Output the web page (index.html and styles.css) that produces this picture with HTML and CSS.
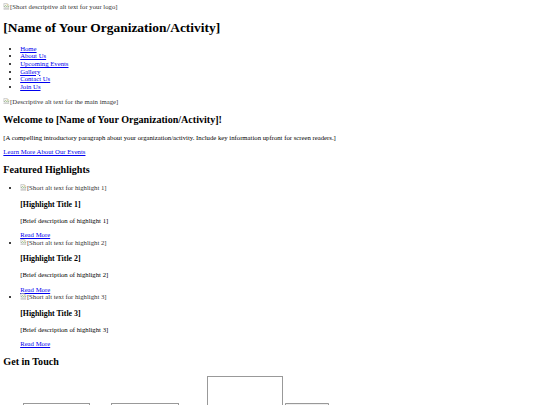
FILE: index.html
```html
<!DOCTYPE html>
<html lang="en">
<head>
<meta charset="utf-8">
<title>[Name of Your Organization/Activity]</title>
<link rel="stylesheet" href="styles.css">
</head>
<body>
<header>
  <span class="alt-img"><svg class="broken" viewBox="0 0 16 16" width="16" height="16"><path d="M2 1h8l4 4v5l-2-1-2 2-2-2-2 2-2-2-2 1z" fill="#f4f4f4" stroke="#999" stroke-width="1"/><path d="M3 9l3-3 3 3 2-2 3 3" fill="none" stroke="#5a9d3a" stroke-width="1.2"/><circle cx="10" cy="4" r="1.2" fill="#e8b84a"/><path d="M2 13l2-1 2 2 2-2 2 2 2-2 2 1v2H2z" fill="#f4f4f4" stroke="#999" stroke-width="1"/></svg>[Short descriptive alt text for your logo]</span>
  <h1>[Name of Your Organization/Activity]</h1>
  <nav>
    <ul>
      <li><a href="#">Home</a></li>
      <li><a href="#">About Us</a></li>
      <li><a href="#">Upcoming Events</a></li>
      <li><a href="#">Gallery</a></li>
      <li><a href="#">Contact Us</a></li>
      <li><a href="#">Join Us</a></li>
    </ul>
  </nav>
</header>
<main>
  <section class="hero">
    <span class="alt-img"><svg class="broken" viewBox="0 0 16 16" width="16" height="16"><path d="M2 1h8l4 4v5l-2-1-2 2-2-2-2 2-2-2-2 1z" fill="#f4f4f4" stroke="#999" stroke-width="1"/><path d="M3 9l3-3 3 3 2-2 3 3" fill="none" stroke="#5a9d3a" stroke-width="1.2"/><circle cx="10" cy="4" r="1.2" fill="#e8b84a"/><path d="M2 13l2-1 2 2 2-2 2 2 2-2 2 1v2H2z" fill="#f4f4f4" stroke="#999" stroke-width="1"/></svg>[Descriptive alt text for the main image]</span>
    <h2>Welcome to [Name of Your Organization/Activity]!</h2>
    <p>[A compelling introductory paragraph about your organization/activity. Include key information upfront for screen readers.]</p>
    <p><a href="#">Learn More About Our Events</a></p>
  </section>
  <section class="highlights">
    <h2>Featured Highlights</h2>
    <ul>
      <li>
        <span class="alt-img"><svg class="broken" viewBox="0 0 16 16" width="16" height="16"><path d="M2 1h8l4 4v5l-2-1-2 2-2-2-2 2-2-2-2 1z" fill="#f4f4f4" stroke="#999" stroke-width="1"/><path d="M3 9l3-3 3 3 2-2 3 3" fill="none" stroke="#5a9d3a" stroke-width="1.2"/><circle cx="10" cy="4" r="1.2" fill="#e8b84a"/><path d="M2 13l2-1 2 2 2-2 2 2 2-2 2 1v2H2z" fill="#f4f4f4" stroke="#999" stroke-width="1"/></svg>[Short alt text for highlight 1]</span>
        <h3>[Highlight Title 1]</h3>
        <p>[Brief description of highlight 1]</p>
        <a href="#">Read More</a>
      </li>
      <li>
        <span class="alt-img"><svg class="broken" viewBox="0 0 16 16" width="16" height="16"><path d="M2 1h8l4 4v5l-2-1-2 2-2-2-2 2-2-2-2 1z" fill="#f4f4f4" stroke="#999" stroke-width="1"/><path d="M3 9l3-3 3 3 2-2 3 3" fill="none" stroke="#5a9d3a" stroke-width="1.2"/><circle cx="10" cy="4" r="1.2" fill="#e8b84a"/><path d="M2 13l2-1 2 2 2-2 2 2 2-2 2 1v2H2z" fill="#f4f4f4" stroke="#999" stroke-width="1"/></svg>[Short alt text for highlight 2]</span>
        <h3>[Highlight Title 2]</h3>
        <p>[Brief description of highlight 2]</p>
        <a href="#">Read More</a>
      </li>
      <li>
        <span class="alt-img"><svg class="broken" viewBox="0 0 16 16" width="16" height="16"><path d="M2 1h8l4 4v5l-2-1-2 2-2-2-2 2-2-2-2 1z" fill="#f4f4f4" stroke="#999" stroke-width="1"/><path d="M3 9l3-3 3 3 2-2 3 3" fill="none" stroke="#5a9d3a" stroke-width="1.2"/><circle cx="10" cy="4" r="1.2" fill="#e8b84a"/><path d="M2 13l2-1 2 2 2-2 2 2 2-2 2 1v2H2z" fill="#f4f4f4" stroke="#999" stroke-width="1"/></svg>[Short alt text for highlight 3]</span>
        <h3>[Highlight Title 3]</h3>
        <p>[Brief description of highlight 3]</p>
        <a href="#">Read More</a>
      </li>
    </ul>
  </section>
  <section class="contact">
    <h2>Get in Touch</h2>
    <form>
      <label for="name">Name:</label>
      <input class="field" type="text" id="name" name="name">
      <label for="email">Email:</label>
      <input class="field" type="email" id="email" name="email">
      <label for="message">Message:</label>
      <textarea class="msg" id="message" name="message"></textarea>
      <button class="send" type="submit">Send Message</button>
    </form>
  </section>
</main>
</body>
</html>
```

FILE: styles.css
```css
html {
  zoom: 0.42;
  background: #fff;
  overflow: hidden;
}
body {
  font-family: "Liberation Serif", "Times New Roman", serif;
  line-height: 1.15;
  color: #000;
}
a {
  color: #0000ee;
}
.alt-img {
  color: #333;
}
.broken {
  vertical-align: -2px;
}
.field {
  box-sizing: border-box;
  width: 160px;
  height: 21px;
  font: 13.33px "Liberation Sans", Arial, sans-serif;
  border: 1px solid #999;
}
.msg {
  box-sizing: border-box;
  width: 181px;
  height: 78px;
  font: 13.33px "Liberation Mono", monospace;
  border: 1px solid #999;
  resize: none;
}
.send {
  box-sizing: border-box;
  width: 105px;
  height: 21px;
  padding: 0;
  white-space: nowrap;
  font: 13.33px "Liberation Sans", Arial, sans-serif;
  background: #efefef;
  border: 1px solid #999;
  border-radius: 2px;
}
```
